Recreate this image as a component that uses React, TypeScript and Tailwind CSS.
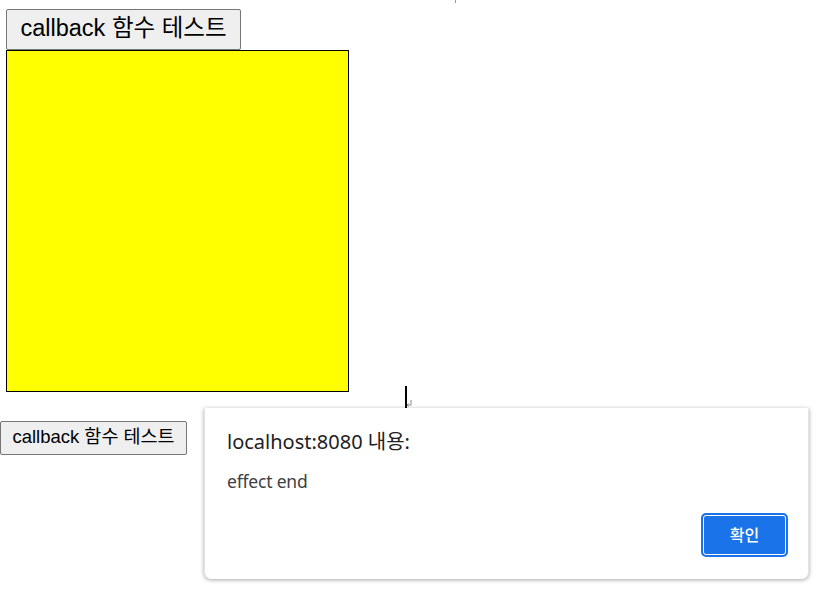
import React from "react";

export default function App() {
  return (
    <div className="relative w-[821px] h-[591px] bg-white overflow-hidden" style={{ fontFamily: '"Liberation Sans", "Noto Sans CJK KR", sans-serif' }}>
      <div className="pl-[6px] pt-[9px]">
        <button className="block h-[41px] w-[235px] border border-[#767676] rounded-[2px] bg-[#efefef] text-[23.5px] text-black leading-none pb-[2px] whitespace-nowrap">
          callback 함수 테스트
        </button>
        <div className="w-[343px] h-[342px] bg-[#ffff00] border border-black" />
      </div>
      <div className="mt-[29px]">
        <button className="block h-[34px] w-[187px] border border-[#767676] rounded-[2px] bg-[#efefef] text-[18.5px] text-black leading-none pb-[1px] whitespace-nowrap">
          callback 함수 테스트
        </button>
      </div>

      {/* alert dialog */}
      <div
        className="absolute left-[204px] top-[408px] w-[605px] h-[171px] bg-white rounded-b-[7px] shadow-[0_1px_4px_rgba(0,0,0,0.35)] border-l border-r border-[#e4e4e4]"
        style={{ fontFamily: '"Noto Sans", "Noto Sans CJK KR", sans-serif' }}
      >
        <div className="pl-[22px] pt-[21px] text-[20px] leading-[26px] text-[#202124] whitespace-nowrap">
          localhost:8080 내용:
        </div>
        <div className="pl-[22px] pt-[16px] text-[17.5px] leading-[20px] text-[#3c4043] tracking-[-0.2px]">
          effect end
        </div>
        <div className="flex justify-end pr-[20px] pt-[22px]">
          <button className="shrink-0 w-[87px] h-[44px] rounded-[5px] bg-[#1a73e8] border-[2px] border-[#1a73e8] p-0 flex">
            <span className="w-full h-full rounded-[3px] border border-white flex items-center justify-center text-white text-[16px] font-medium leading-none">
              확인
            </span>
          </button>
        </div>
      </div>

      {/* text cursor */}
      <div className="absolute left-[405px] top-[386px] w-[2px] h-[22px] bg-black" />
      <svg className="absolute left-[406px] top-[400px]" width="6" height="8" viewBox="0 0 6 8">
        <path d="M5 0 V5 H1 M2.5 3.5 L1 5 L2.5 6.5" stroke="#888" strokeWidth="1" fill="none" />
      </svg>
      <div className="absolute left-[455px] top-0 w-[1px] h-[3px] bg-[#999]" />
    </div>
  );
}
